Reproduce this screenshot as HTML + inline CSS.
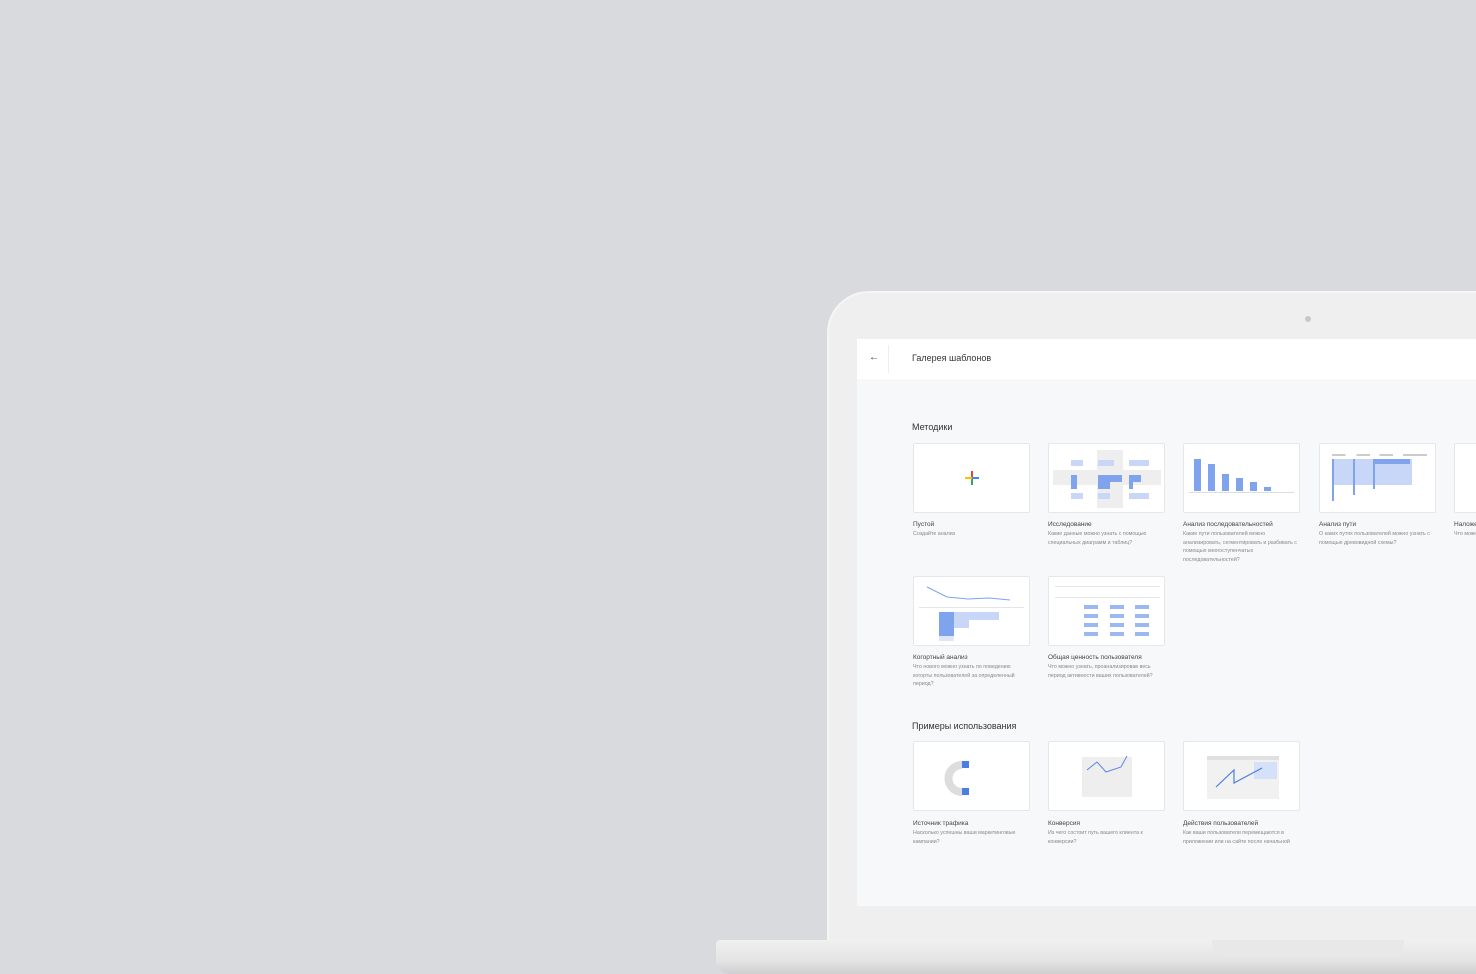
<!DOCTYPE html>
<html><head><meta charset="utf-8"><style>
*{margin:0;padding:0;box-sizing:border-box}
html,body{width:1476px;height:974px;overflow:hidden}
body{background:#d9dadd;font-family:"Liberation Sans",sans-serif}
#w{position:relative;width:1476px;height:974px;overflow:hidden}
.lid{position:absolute;left:827px;top:291px;width:649px;height:660px;background:#efefef;border-radius:42px 0 0 0;border:2px solid #f5f5f5;border-right:none}
.screen{position:absolute;left:857px;top:339px;width:619px;height:567px;background:#f7f8f9}
.hdr{position:absolute;left:857px;top:339px;width:619px;height:40px;background:#fff}
.base{position:absolute;left:716px;top:940px;width:760px;height:34px;background:linear-gradient(#f0f0f0,#e4e4e4 60%,#cfcfd1);border-radius:4px 0 0 14px}
.notch{position:absolute;left:1212px;top:940px;width:192px;height:16px;background:#e8e8e8;border-radius:0 0 12px 12px}
.card{position:absolute;width:117px;height:70px;background:#fff;border:1px solid #e6e7e9;border-radius:2px;overflow:hidden}
.t{position:absolute;font-size:6.5px;color:#444;white-space:nowrap}
.d{position:absolute;font-size:5.3px;color:#888;line-height:8.5px;width:118px}
.h{position:absolute;font-size:9px;color:#333}
.b{position:absolute;background:#7fa3ec}
.l{position:absolute;background:#c8d7f7}
.clip{position:absolute;left:1454px;top:443px;width:22px;height:130px;overflow:hidden}
</style></head><body><div id="w">
<div class="lid"></div>
<div style="position:absolute;left:1305px;top:316px;width:6px;height:6px;border-radius:50%;background:#c8c8c8"></div>
<div class="screen"></div>
<div class="hdr"></div>
<div style="position:absolute;left:888px;top:345px;width:1px;height:28px;background:#eee"></div>
<div style="position:absolute;left:869px;top:352px;font-size:10px;color:#333">←</div>
<div class="h" style="left:912px;top:353px;color:#333">Галерея шаблонов</div>
<div class="h" style="left:912px;top:422px">Методики</div>

<div class="card" style="left:913px;top:443px"><div style="position:absolute;left:57px;top:27px;width:2px;height:14px;background:#ea4335"></div><div style="position:absolute;left:51px;top:33px;width:14px;height:2px;background:linear-gradient(90deg,#fbbc05 50%,#4285f4 50%)"></div><div style="position:absolute;left:57px;top:35px;width:2px;height:6px;background:#34a853"></div></div>
<div class="t" style="left:913px;top:521px">Пустой</div>
<div class="d" style="left:913px;top:530px">Создайте анализ</div>

<div class="card" style="left:1048px;top:443px">
<div style="position:absolute;left:4px;top:26px;width:108px;height:15px;background:#eee"></div>
<div style="position:absolute;left:48px;top:6px;width:26px;height:58px;background:#eee"></div>
<div class="l" style="left:22px;top:16px;width:12px;height:6px"></div><div class="l" style="left:49px;top:16px;width:16px;height:6px"></div><div class="l" style="left:80px;top:16px;width:20px;height:6px"></div>
<div class="b" style="left:22px;top:31px;width:6px;height:14px"></div><div class="b" style="left:49px;top:31px;width:24px;height:7px"></div><div class="b" style="left:49px;top:38px;width:12px;height:7px"></div><div class="b" style="left:80px;top:31px;width:12px;height:7px"></div><div class="b" style="left:80px;top:38px;width:4px;height:7px"></div>
<div class="l" style="left:22px;top:49px;width:12px;height:6px"></div><div class="l" style="left:49px;top:49px;width:12px;height:6px"></div><div class="l" style="left:80px;top:49px;width:20px;height:6px"></div>
</div>
<div class="t" style="left:1048px;top:521px">Исследование</div>
<div class="d" style="left:1048px;top:530px">Какие данные можно узнать с помощью специальных диаграмм и таблиц?</div>

<div class="card" style="left:1183px;top:443px">
<div class="b" style="left:10px;top:15px;width:7px;height:32px"></div><div class="b" style="left:24px;top:20px;width:7px;height:27px"></div><div class="b" style="left:38px;top:30px;width:7px;height:17px"></div><div class="b" style="left:52px;top:34px;width:7px;height:13px"></div><div class="b" style="left:66px;top:38px;width:7px;height:9px"></div><div class="b" style="left:80px;top:43px;width:7px;height:4px"></div>
<div style="position:absolute;left:5px;top:48px;width:105px;height:1px;background:#ddd"></div></div>
<div class="t" style="left:1183px;top:521px">Анализ последовательностей</div>
<div class="d" style="left:1183px;top:530px">Какие пути пользователей можно анализировать, сегментировать и разбивать с помощью многоступенчатых последовательностей?</div>

<div class="card" style="left:1319px;top:443px">
<div style="position:absolute;left:12px;top:10px;width:95px;height:2px;background:linear-gradient(90deg,#ccc 14%,transparent 14% 26%,#ccc 26% 40%,transparent 40% 50%,#ccc 50% 64%,transparent 64% 75%,#ccc 75%)"></div>
<div class="l" style="left:12px;top:15px;width:80px;height:26px"></div><div class="b" style="left:12px;top:15px;width:2px;height:42px"></div><div class="b" style="left:33px;top:15px;width:2px;height:36px"></div><div class="b" style="left:53px;top:15px;width:2px;height:30px"></div><div class="b" style="left:55px;top:15px;width:35px;height:5px"></div></div>
<div class="t" style="left:1319px;top:521px">Анализ пути</div>
<div class="d" style="left:1319px;top:530px">О каких путях пользователей можно узнать с помощью древовидной схемы?</div>

<div class="clip">
<div class="card" style="left:0;top:0"></div>
<div class="t" style="left:0;top:78px">Наложение</div>
<div class="d" style="left:0;top:87px">Что можно узнать пользователях версии</div>
</div>

<div class="card" style="left:913px;top:576px">
<svg width="117" height="70" style="position:absolute;left:0;top:0"><polyline points="13,10 33,20 54,22 75,21 96,23" fill="none" stroke="#7fa3ec" stroke-width="1"/></svg>
<div style="position:absolute;left:5px;top:30px;width:105px;height:1px;background:#e5e5e5"></div>
<div class="b" style="left:25px;top:35px;width:15px;height:24px"></div><div class="l" style="left:40px;top:35px;width:15px;height:16px"></div><div class="l" style="left:55px;top:35px;width:30px;height:8px"></div><div class="l" style="left:25px;top:59px;width:15px;height:5px;opacity:.6"></div></div>
<div class="t" style="left:913px;top:654px">Когортный анализ</div>
<div class="d" style="left:913px;top:663px">Что нового можно узнать по поведению когорты пользователей за определенный период?</div>

<div class="card" style="left:1048px;top:576px">
<div style="position:absolute;left:6px;top:9px;width:105px;height:1px;background:#e5e5e5"></div><div style="position:absolute;left:6px;top:20px;width:105px;height:1px;background:#e5e5e5"></div>
<div class="b" style="left:35px;top:28px;width:14px;height:32px;background:repeating-linear-gradient(#9bb8ef 0 4px,transparent 4px 9px)"></div>
<div class="b" style="left:61px;top:28px;width:14px;height:32px;background:repeating-linear-gradient(#9bb8ef 0 4px,transparent 4px 9px)"></div>
<div class="b" style="left:86px;top:28px;width:14px;height:32px;background:repeating-linear-gradient(#9bb8ef 0 4px,transparent 4px 9px)"></div></div>
<div class="t" style="left:1048px;top:654px">Общая ценность пользователя</div>
<div class="d" style="left:1048px;top:663px">Что можно узнать, проанализировав весь период активности ваших пользователей?</div>

<div class="h" style="left:912px;top:721px">Примеры использования</div>

<div class="card" style="left:913px;top:741px"><svg width="117" height="70" style="position:absolute;left:0;top:0"><path d="M48,23 A13,13 0 0 0 48,50" fill="none" stroke="#ddd" stroke-width="8"/><rect x="48" y="19" width="7" height="7" fill="#4a7ee0"/><rect x="48" y="46" width="7" height="7" fill="#4a7ee0"/></svg></div>
<div class="t" style="left:913px;top:820px">Источник трафика</div>
<div class="d" style="left:913px;top:829px">Насколько успешны ваши маркетинговые кампании?</div>

<div class="card" style="left:1048px;top:741px"><svg width="117" height="70" style="position:absolute;left:0;top:0"><rect x="33" y="15" width="50" height="40" fill="#eee"/><polyline points="38,28 48,20 57,30 72,25 78,14 M57,30 58,45 75,50 M38,28 40,42 58,45" fill="none" stroke="#5b88e3" stroke-width="1"/></svg></div>
<div class="t" style="left:1048px;top:820px">Конверсия</div>
<div class="d" style="left:1048px;top:829px">Из чего состоит путь вашего клиента к конверсии?</div>

<div class="card" style="left:1183px;top:741px"><svg width="117" height="70" style="position:absolute;left:0;top:0"><rect x="23" y="14" width="72" height="43" fill="#f1f1f1"/><rect x="23" y="14" width="72" height="4" fill="#e0e0e0"/><rect x="70" y="20" width="23" height="17" fill="#d4e1f9"/><polyline points="32,45 50,28 50,41 78,26" fill="none" stroke="#4a7ee0" stroke-width="1.2"/></svg></div>
<div class="t" style="left:1183px;top:820px">Действия пользователей</div>
<div class="d" style="left:1183px;top:829px">Как ваши пользователи перемещаются в приложении или на сайте после начальной</div>

<div class="base"></div>
<div class="notch"></div>
</div></body></html>
